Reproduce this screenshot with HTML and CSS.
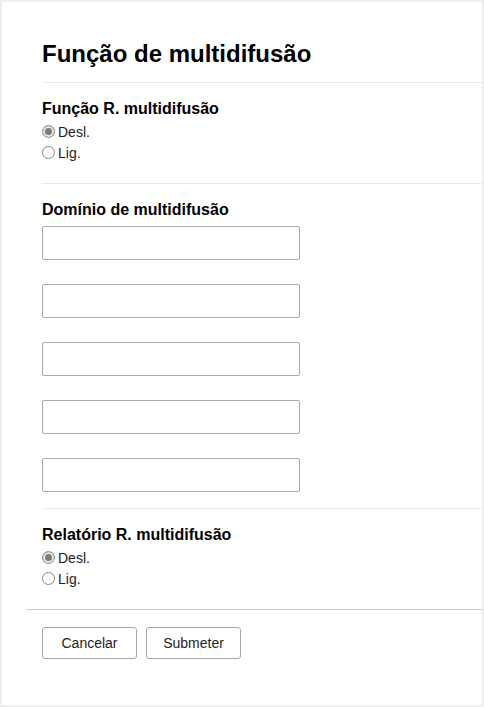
FILE: index.html
```html
<!DOCTYPE html>
<html lang="pt">
<head>
<meta charset="utf-8">
<title>Função de multidifusão</title>
<link rel="stylesheet" href="styles.css">
</head>
<body>
<div class="page">
  <div class="inner">
    <h1 class="title">Função de multidifusão</h1>
    <section class="section">
      <h2 class="heading">Função R. multidifusão</h2>
      <label class="radio-row"><input class="radio" type="radio" name="f1" checked><span>Desl.</span></label>
      <label class="radio-row"><input class="radio" type="radio" name="f1"><span>Lig.</span></label>
    </section>
    <section class="section domain">
      <h2 class="heading">Domínio de multidifusão</h2>
      <div class="inputs">
        <input class="text-input" type="text">
        <input class="text-input" type="text">
        <input class="text-input" type="text">
        <input class="text-input" type="text">
        <input class="text-input" type="text">
      </div>
    </section>
    <section class="section">
      <h2 class="heading">Relatório R. multidifusão</h2>
      <label class="radio-row"><input class="radio" type="radio" name="f2" checked><span>Desl.</span></label>
      <label class="radio-row"><input class="radio" type="radio" name="f2"><span>Lig.</span></label>
    </section>
  </div>
  <div class="actions">
    <button class="btn" type="button">Cancelar</button>
    <button class="btn" type="button">Submeter</button>
  </div>
</div>
</body>
</html>
```
FILE: styles.css
```css
html, body {
  margin: 0;
  padding: 0;
}
body {
  background: #eeeeee;
  font-family: "Liberation Sans", Arial, sans-serif;
  color: #000;
  padding: 2px;
}
.page {
  background: #fff;
  min-height: 703px;
  width: 480px;
  box-sizing: border-box;
  padding-left: 24px;
}
.inner {
  padding-left: 16px;
}
.title {
  margin: 0;
  padding-top: 38px;
  font-size: 24px;
  line-height: 28px;
  font-weight: bold;
  height: 42px;
}
.section {
  border-top: 1px solid #e8e8e8;
  padding-top: 16px;
  padding-bottom: 20px;
}
.section.domain {
  padding-bottom: 16px;
}
.heading {
  margin: 0 0 2px 0;
  font-size: 16px;
  line-height: 20px;
  font-weight: bold;
}
.radio-row {
  display: flex;
  align-items: center;
  height: 21px;
  font-size: 14px;
  color: #222;
}
.radio {
  appearance: none;
  -webkit-appearance: none;
  margin: 0 3px 0 0;
  width: 13px;
  height: 13px;
  border: 1px solid #858585;
  border-radius: 50%;
  background: #fff;
  box-sizing: border-box;
}
.radio:checked {
  border-color: #9a9a9a;
  background: #7d7d7d;
  box-shadow: inset 0 0 0 2px #e6e6e6;
}
.inputs {
  display: flex;
  flex-direction: column;
  gap: 24px;
  padding-top: 4px;
}
.text-input {
  box-sizing: border-box;
  width: 258px;
  height: 34px;
  margin: 0;
  border: 1px solid #a9a9a9;
  border-radius: 2px;
  background: #fff;
}
.actions {
  border-top: 1px solid #cccccc;
  padding: 17px 0 0 16px;
  display: flex;
  gap: 9px;
}
.btn {
  width: 95px;
  height: 32px;
  background: #fff;
  border: 1px solid #a6a6a6;
  border-radius: 3px;
  font-family: "Liberation Sans", Arial, sans-serif;
  font-size: 14px;
  color: #222;
  padding: 0;
}
```
